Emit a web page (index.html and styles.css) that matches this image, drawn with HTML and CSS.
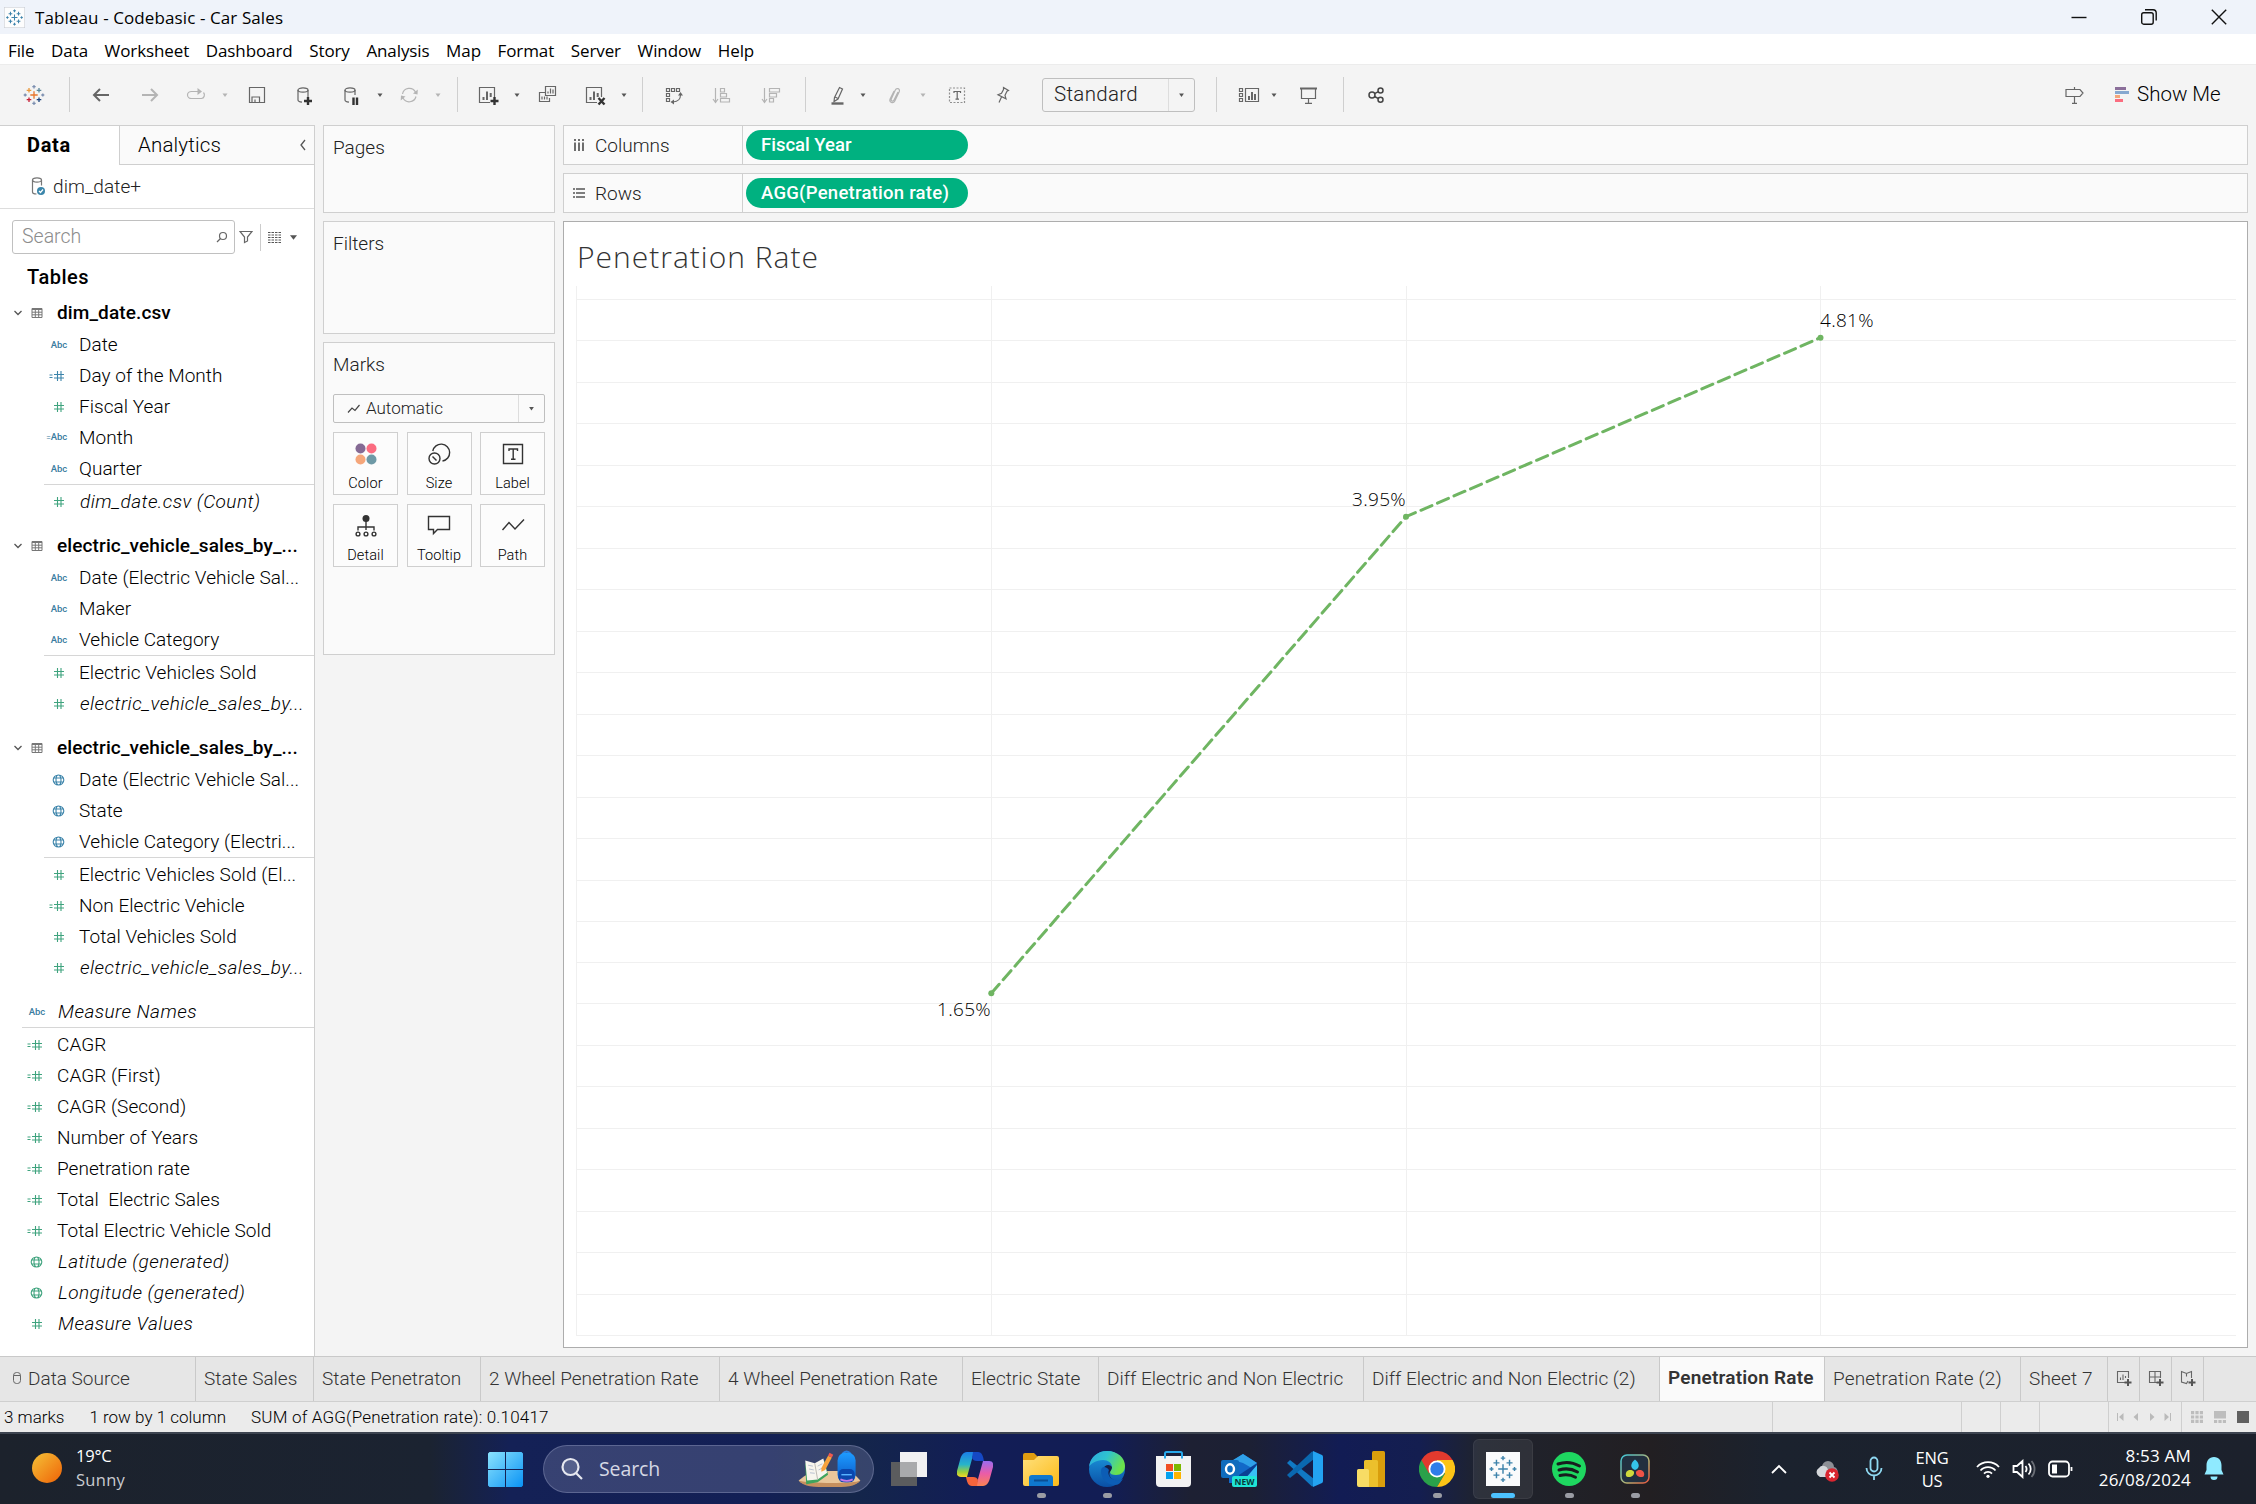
FILE: index.html
```html
<!DOCTYPE html>
<html lang="en">
<head>
<meta charset="utf-8">
<title>Tableau - Codebasic - Car Sales</title>
<link rel="stylesheet" href="styles.css">
</head>
<body>
<svg class="defs" aria-hidden="true">
  <defs>
    <symbol id="hash" viewBox="0 0 24 16"><path d="M13.500 3v10M17 3v10M10 6.500h10M10 10h10"/></symbol>
    <symbol id="eqhash" viewBox="0 0 24 16"><path d="M13.500 3v10M17 3v10M10 6.500h10M10 10h10M5.500 7h3M5.500 9.500h3"/></symbol>
    <symbol id="globe" viewBox="0 0 24 16"><path d="M9.200 8a5.300 5 0 1 0 10.600 0a5.300 5 0 1 0 -10.600 0M12 8a2.500 5 0 1 0 5 0a2.500 5 0 1 0 -5 0M9.800 6h9.400M9.800 10h9.400"/></symbol>
    <symbol id="table" viewBox="0 0 12 12"><path d="M1 1.500h10v9h-10zM1 2.500h10M1 5.200h10M1 7.800h10M4.300 3v7.500M7.700 3v7.500"/></symbol>
    <symbol id="chev" viewBox="0 0 10 8"><path d="M1.500 2l3.500 3.500 3.500-3.500"/></symbol>
    <symbol id="caret" viewBox="0 0 26 26"><path d="M10.500 11.500h5L13 15z"/></symbol>
    <symbol id="logo" viewBox="0 0 26 26">
      <path class="l1" d="M13 9.300v7.400M9.300 13h7.400"/>
      <path class="l2" d="M8 6v4.600M5.700 8.300h4.600"/>
      <path class="l3" d="M18 6v4.600M15.700 8.300h4.600"/>
      <path class="l4" d="M8 15.400v4.600M5.700 17.700h4.600"/>
      <path class="l5" d="M18 15.400v4.600M15.700 17.700h4.600"/>
      <path class="l6" d="M13 3v3.400M11.300 4.700h3.400M13 19.600v3.400M11.300 21.300h3.400M4.200 11.500v3M2.700 13h3M21.800 11.500v3M20.300 13h3"/>
    </symbol>
  </defs>
</svg>

<header class="titlebar">
  <svg class="app-icon" viewBox="0 0 26 26"><rect width="26" height="26" fill="#fdfdfd" stroke="#c4c8d0"/><use href="#logo" width="26" height="26"/></svg>
  <span class="app-title">Tableau - Codebasic - Car Sales</span>
  <div class="win-controls">
    <svg viewBox="0 0 16 16"><path d="M.5 8.500h15"/></svg>
    <svg viewBox="0 0 16 16"><rect x=".7" y="3.700" width="11.500" height="11.500" rx="2"/><path d="M4 .8h8a3.200 3.200 0 0 1 3.200 3.200v7.500"/></svg>
    <svg viewBox="0 0 16 16"><path d="M.8.8l14.400 14.400M15.200.8L.8 15.200"/></svg>
  </div>
</header>

<nav class="menubar">
  <span>File</span><span>Data</span><span>Worksheet</span><span>Dashboard</span><span>Story</span><span>Analysis</span><span>Map</span><span>Format</span><span>Server</span><span>Window</span><span>Help</span>
</nav>

<div class="toolbar">
  <svg class="tb colorlogo"><use href="#logo" width="26" height="26"/></svg>
  <i class="sep"></i>
  <svg class="tb bold"><path d="M21 13H6M12 7l-6 6 6 6"/></svg>
  <svg class="tb bold off"><path d="M5 13h15M14 7l6 6-6 6"/></svg>
  <svg class="tb off"><path d="M15 9.500H8.500a4 3.500 0 0 0 0 7h10a3 3.500 0 0 0 2-6"/><path class="f" d="M14.500 6l4.500 3.500-4.500 3.500z"/></svg>
  <svg class="tb caret off"><use href="#caret"/></svg>
  <svg class="tb"><path d="M5.500 5.500h15v15h-15zM8 20v-5h7.500v5M11 20v-2.500"/></svg>
  <svg class="tb"><path d="M6 8v10c0 1.500 2 2 4 2.200M16 8v7"/><ellipse cx="11" cy="8" rx="5" ry="2.200"/><path class="k" d="M16 15v8M12 19h8"/></svg>
  <svg class="tb"><path d="M7 8v10c0 1.500 2 2 4 2.200M17 8v5"/><ellipse cx="12" cy="8" rx="5" ry="2.200"/><path class="k" d="M15.500 15.500v7.500M19 15.500v7.500"/></svg>
  <svg class="tb caret"><use href="#caret"/></svg>
  <svg class="tb off"><path d="M6.500 12a7 7 0 0 1 13-2M20 14.500a7 7 0 0 1-13 1.500"/><path class="f" d="M17 11.500l4.500 1 .3-5zM9.500 14.500l-4.500-1-.3 5z"/></svg>
  <svg class="tb caret off"><use href="#caret"/></svg>
  <i class="sep"></i>
  <svg class="tb"><path d="M15 20.500H4.500v-15h15V15"/><path class="h" d="M8.500 18v-3M12 18V9.500M15.700 15v-4"/><path class="k" d="M19.500 15v8M15.500 19h8"/></svg>
  <svg class="tb caret"><use href="#caret"/></svg>
  <svg class="tb"><path d="M10 10.500H4.500v9h10V16M10.500 4.500h10v9h-10zM7 17.500v-3M9.500 17.500v-3M12 17.500v-3M13 11.500v-2M15.500 11.500v-5M18 11.500v-4"/></svg>
  <svg class="tb"><path d="M15 20.500H4.500v-15h15V15"/><path class="h" d="M8.500 18v-3M12 18V9.500M15.700 15v-4"/><path class="k" d="M16.500 16l6 6.500M22.500 16l-6 6.500"/></svg>
  <svg class="tb caret"><use href="#caret"/></svg>
  <i class="sep"></i>
  <svg class="tb"><path d="M5.500 6.500h3v3h-3zM10.500 6.500h3v3h-3zM15.500 6.500h3v3h-3zM5.500 11.500h3v3h-3zM5.500 16.500h3v3h-3zM19.500 12.500c0 5-2 7-7.500 7.500"/><path class="f" d="M17 13.500h5l-2.500-3.500zM13 22.500v-5l-3.500 2.500z"/></svg>
  <svg class="tb off"><path d="M6.500 6v14M4 17l2.500 3.500L9 17M11.500 6.500h4v3.500h-4zM11.500 11.500h6v3.500h-6zM11.500 16.500h9v3.500h-9z"/></svg>
  <svg class="tb off"><path d="M6.500 6v14M4 17l2.500 3.500L9 17M11.500 6.500h10v3.500h-10zM11.500 11.500h7v3.500h-7zM11.500 16.500h4v3.500h-4z"/></svg>
  <i class="sep"></i>
  <svg class="tb"><path d="M9.500 15.500l5-10 3 1.500-4.500 10-4 2.500zM10 15l3 1.500"/><path class="k g" d="M6.500 21.500h12"/></svg>
  <svg class="tb caret"><use href="#caret"/></svg>
  <svg class="tb off"><path d="M16 10l-4 8c-1 2-3.500 1-2.700-1l4-9c1-2.500 5-1.500 4 1.500l-4.500 9.500c-1.500 3-6 1.500-4.700-2l4-8"/></svg>
  <svg class="tb caret off"><use href="#caret"/></svg>
  <svg class="tb"><rect x="5.500" y="6" width="15" height="14.500" stroke-dasharray="2 1.500" opacity=".7"/><path d="M10 11v-1.500h6.500V11M13.200 9.500V17M11.500 17.200h3.500"/></svg>
  <svg class="tb"><path d="M13.500 5.500l5 3-1.500.8-2 4 1 3.500-8-4 3.500-1.500 2-3.800zM11.500 15l-2.500 5.500"/></svg>
  <div class="fit"><span>Standard</span><svg class="tb caret"><use href="#caret"/></svg></div>
  <i class="sep"></i>
  <svg class="tb"><path d="M9.500 6.500h13v13h-13zM3.500 6.500h3v3h-3zM3.500 11.500h3v3h-3zM3.500 16.500h3v3h-3z"/><path class="h" d="M13 18v-4M16 18V10M19 18v-6"/></svg>
  <svg class="tb caret"><use href="#caret"/></svg>
  <svg class="tb"><path d="M6.500 7v9.500h14V7M13.500 16.500V21M10 21.300h7"/><path class="h" d="M5 6.500h17"/></svg>
  <i class="sep"></i>
  <svg class="tb dark"><circle cx="9" cy="13" r="3"/><circle cx="17.500" cy="8.500" r="2.500"/><circle cx="17.500" cy="17.800" r="2.500"/><path d="M11.500 11.700l4-2M11.500 14.500l4 2.200"/></svg>
  <svg class="tb"><path d="M5 7.500h14l3 3.500-3 3.500H5zM13.500 5v2.500M13.500 14.500V21M11 21.300h5"/></svg>
  <div class="showme">
    <svg viewBox="0 0 15 16"><path fill="#8b6f9a" d="M0 0h11v3H0z"/><path fill="#86a8d0" d="M0 4h14v3H0z"/><path fill="#f4a67a" d="M0 8h5v3H0z"/><path fill="#fb6d80" d="M0 12h8v3H0z"/></svg>
    <span>Show Me</span>
  </div>
</div>

<main class="workspace">
  <aside class="data-pane">
    <div class="pane-tabs">
      <b>Data</b>
      <div><span>Analytics</span><svg viewBox="0 0 8 12"><path d="M6 1L2 6l4 5"/></svg></div>
    </div>
    <div class="source">
      <svg viewBox="0 0 16 24"><path d="M1.500 5v12c0 1 1.500 2 4 2M10.500 5v5.500"/><ellipse cx="6" cy="5" rx="4.500" ry="2.200"/><circle cx="10" cy="16" r="4" fill="#3b86ab" stroke="none"/><path d="M8 16l1.500 1.500 2.500-3" stroke="#fff"/></svg>
      <span>dim_date+</span>
    </div>
    <div class="search-row">
      <div class="search"><span>Search</span><svg viewBox="0 0 12 12"><circle cx="7" cy="5" r="3.500"/><path d="M4.500 7.500L1 11"/></svg></div>
      <svg class="funnel" viewBox="0 0 14 14"><path d="M1 1.500h12L8.500 7v4l-3 1.500V7z"/></svg>
      <i></i>
      <svg class="grid" viewBox="0 0 13 11"><path d="M0 .5h13M0 3h13M0 5.500h13M0 8h13M0 10.500h13" stroke-dasharray="2.500 1"/></svg>
      <svg class="drop" viewBox="0 0 8 5"><path d="M0 0h8L4 5z"/></svg>
    </div>
    <h3>Tables</h3>
    <section class="tables">
      <div class="head"><svg class="cv"><use href="#chev"/></svg><svg class="tbl"><use href="#table"/></svg><b>dim_date.csv</b></div>
      <div class="row blue"><em>Abc</em><span>Date</span></div>
      <div class="row blue"><svg><use href="#eqhash"/></svg><span>Day of the Month</span></div>
      <div class="row"><svg><use href="#hash"/></svg><span>Fiscal Year</span></div>
      <div class="row blue"><em><small>=</small>Abc</em><span>Month</span></div>
      <div class="row blue last"><em>Abc</em><span>Quarter</span></div>
      <div class="row it"><svg><use href="#hash"/></svg><span>dim_date.csv (Count)</span></div>

      <div class="head next"><svg class="cv"><use href="#chev"/></svg><svg class="tbl"><use href="#table"/></svg><b>electric_vehicle_sales_by_...</b></div>
      <div class="row blue"><em>Abc</em><span>Date (Electric Vehicle Sal...</span></div>
      <div class="row blue"><em>Abc</em><span>Maker</span></div>
      <div class="row blue last"><em>Abc</em><span>Vehicle Category</span></div>
      <div class="row"><svg><use href="#hash"/></svg><span>Electric Vehicles Sold</span></div>
      <div class="row it"><svg><use href="#hash"/></svg><span>electric_vehicle_sales_by...</span></div>

      <div class="head next"><svg class="cv"><use href="#chev"/></svg><svg class="tbl"><use href="#table"/></svg><b>electric_vehicle_sales_by_...</b></div>
      <div class="row blue"><svg><use href="#globe"/></svg><span>Date (Electric Vehicle Sal...</span></div>
      <div class="row blue"><svg><use href="#globe"/></svg><span>State</span></div>
      <div class="row blue last"><svg><use href="#globe"/></svg><span>Vehicle Category (Electri...</span></div>
      <div class="row"><svg><use href="#hash"/></svg><span>Electric Vehicles Sold (El...</span></div>
      <div class="row"><svg><use href="#eqhash"/></svg><span>Non Electric Vehicle</span></div>
      <div class="row"><svg><use href="#hash"/></svg><span>Total Vehicles Sold</span></div>
      <div class="row it"><svg><use href="#hash"/></svg><span>electric_vehicle_sales_by...</span></div>
    </section>
    <section class="measures">
      <div class="row blue it last"><em>Abc</em><span>Measure Names</span></div>
      <div class="row"><svg><use href="#eqhash"/></svg><span>CAGR</span></div>
      <div class="row"><svg><use href="#eqhash"/></svg><span>CAGR (First)</span></div>
      <div class="row"><svg><use href="#eqhash"/></svg><span>CAGR (Second)</span></div>
      <div class="row"><svg><use href="#eqhash"/></svg><span>Number of Years</span></div>
      <div class="row"><svg><use href="#eqhash"/></svg><span>Penetration rate</span></div>
      <div class="row"><svg><use href="#eqhash"/></svg><span>Total&nbsp; Electric Sales</span></div>
      <div class="row"><svg><use href="#eqhash"/></svg><span>Total Electric Vehicle Sold</span></div>
      <div class="row it"><svg><use href="#globe"/></svg><span>Latitude (generated)</span></div>
      <div class="row it"><svg><use href="#globe"/></svg><span>Longitude (generated)</span></div>
      <div class="row it"><svg><use href="#hash"/></svg><span>Measure Values</span></div>
    </section>
  </aside>

  <div class="cards">
    <section class="card pages"><h4>Pages</h4></section>
    <section class="card filters"><h4>Filters</h4></section>
    <section class="card marks">
      <h4>Marks</h4>
      <div class="mark-type"><svg class="zig" viewBox="0 0 14 12"><path d="M1 9.500l4-4.500 3 2.500 4.500-5.500"/></svg><span>Automatic</span><svg class="tb caret"><use href="#caret"/></svg></div>
      <div class="mark-grid">
        <div><svg viewBox="0 0 24 24"><g stroke="none"><circle cx="6.500" cy="6.500" r="5" fill="#856a94"/><circle cx="17.500" cy="6.500" r="5" fill="#fb6c80"/><circle cx="6.500" cy="17.500" r="5" fill="#f5a67a"/><circle cx="17.500" cy="17.500" r="5" fill="#6e99a6"/></g></svg><span>Color</span></div>
        <div><svg viewBox="0 0 24 24"><path d="M5.800 9A8.500 8.500 0 1 1 15.500 19"/><circle cx="7.500" cy="16.500" r="5.500"/><path d="M5.500 14.500l4 4"/></svg><span>Size</span></div>
        <div><svg viewBox="0 0 24 24"><path d="M2.500 2.500h19v19h-19zM8 9V7h8.500v2M12.200 7v10M10 17.200h4.500"/></svg><span>Label</span></div>
        <div><svg viewBox="0 0 24 24"><circle cx="12" cy="4.500" r="3.500" fill="#333" stroke="none"/><path d="M12 7v9M4 16.500V13h16v3.500"/><circle cx="4" cy="20" r="1.900"/><circle cx="12" cy="20" r="1.900"/><circle cx="20" cy="20" r="1.900"/></svg><span>Detail</span></div>
        <div><svg viewBox="0 0 24 24"><path d="M1.500 2.500h21v13h-12l-4 4v-4h-5z"/></svg><span>Tooltip</span></div>
        <div><svg viewBox="0 0 24 24"><path d="M1.500 16L8 8.500l6 6.500 9-9.500"/></svg><span>Path</span></div>
      </div>
    </section>
  </div>

  <div class="view">
    <div class="shelf">
      <div class="shelf-name"><svg viewBox="0 0 12 13"><path d="M2 0v2M6 0v2M10 0v2M2 3.500V12M6 3.500V12M10 3.500V12"/></svg><span>Columns</span></div>
      <div class="pill">Fiscal Year</div>
    </div>
    <div class="shelf">
      <div class="shelf-name"><svg viewBox="0 0 12 13"><path d="M0 2h2M0 6h2M0 10h2M3 2h9M3 6h9M3 10h9"/></svg><span>Rows</span></div>
      <div class="pill wide">AGG(Penetration rate)</div>
    </div>
    <div class="sheet">
      <h1>Penetration Rate</h1>
      <svg class="chart" viewBox="564 286 1683 1060">
        <path class="gridline" d="M576 299.500H2236M576 340.500H2236M576 382.500H2236M576 423.500H2236M576 465.500H2236M576 506.500H2236M576 548.500H2236M576 589.500H2236M576 631.500H2236M576 672.500H2236M576 714.500H2236M576 755.500H2236M576 797.500H2236M576 838.500H2236M576 880.500H2236M576 921.500H2236M576 962.500H2236M576 1003.500H2236M576 1045.500H2236M576 1086.500H2236M576 1128.500H2236M576 1169.500H2236M576 1211.500H2236M576 1252.500H2236M576 1294.500H2236M576 1335.500H2236"/>
        <path class="gridline" d="M576.500 286v1050M991.500 286v1050M1406.500 286v1050M1820.500 286v1050"/>
        <path class="series" d="M991.300 993.300L1406 516.700L1820.500 337.700"/>
        <g class="points"><circle cx="991.300" cy="993.300" r="3"/><circle cx="1406" cy="516.700" r="3"/><circle cx="1820.500" cy="337.700" r="3"/></g>
        <g class="labels">
          <text x="991" y="1016" text-anchor="end">1.65%</text>
          <text x="1406" y="506" text-anchor="end">3.95%</text>
          <text x="1820" y="327">4.81%</text>
        </g>
      </svg>
    </div>
  </div>
</main>

<nav class="sheets">
  <div class="ds"><svg viewBox="0 0 10 14"><rect x="1.500" y="1.500" width="7" height="11" rx="3"/><path d="M1.500 4.500h7"/></svg>Data Source</div>
  <div>State Sales</div>
  <div>State Penetraton</div>
  <div>2 Wheel Penetration Rate</div>
  <div>4 Wheel Penetration Rate</div>
  <div>Electric State</div>
  <div>Diff Electric and Non Electric</div>
  <div>Diff Electric and Non Electric (2)</div>
  <div class="active">Penetration Rate</div>
  <div class="loose">Penetration Rate (2)</div>
  <div class="loose">Sheet 7</div>
  <div class="new"><svg viewBox="0 0 16 18"><path d="M9 12.500H1.500v-11h11V8M4.500 10V7.500M7 10V4.500M9.500 8V6"/><path class="k" d="M12 9v7M8.500 12.500h7"/></svg></div>
  <div class="new"><svg viewBox="0 0 16 18"><path d="M9 12.500H1.500v-11h11V8M7 1.500v11M1.500 7h11"/><path class="k" d="M12 9v7M8.500 12.500h7"/></svg></div>
  <div class="new"><svg viewBox="0 0 16 18"><path d="M8 11l-1.500 2.500-5-1.500V1.500L6.500 3.500l5-2V8M6.500 3.500v3"/><path class="k" d="M12 9v7M8.500 12.500h7"/></svg></div>
</nav>

<footer class="status">
  <div class="facts"><span>3 marks</span><span>1 row by 1 column</span><span class="sum">SUM of AGG(Penetration rate): 0.10417</span></div>
  <div></div><div></div><div></div><div></div>
  <div class="pager">
    <svg viewBox="0 0 8 8"><path d="M1 0h1v8H1zM7.500 0v8L3 4z"/></svg>
    <svg viewBox="0 0 8 8"><path d="M6 0v8L1.500 4z"/></svg>
    <svg viewBox="0 0 8 8"><path d="M2 0v8l4.500-4z"/></svg>
    <svg viewBox="0 0 8 8"><path d="M6 0h1v8H6zM.5 0v8L5 4z"/></svg>
  </div>
  <div class="modes">
    <svg viewBox="0 0 12 12"><path d="M0 0h3.200v3.200H0zM4.400 0h3.200v3.200H4.400zM8.800 0H12v3.200H8.800zM0 4.400h3.200v3.200H0zM4.400 4.400h3.200v3.200H4.400zM8.800 4.400H12v3.200H8.800zM0 8.800h3.200V12H0zM4.400 8.800h3.200V12H4.400zM8.800 8.800H12V12H8.800z"/></svg>
    <svg viewBox="0 0 12 12"><path d="M0 0h12v7.500H0zM0 9h3.200v3H0zM4.400 9h3.200v3H4.400zM8.800 9H12v3H8.800z"/></svg>
    <svg class="on" viewBox="0 0 12 12"><path d="M0 0h12v12H0z"/></svg>
  </div>
</footer>

<footer class="taskbar">
  <svg class="fillsrc" aria-hidden="true"><defs>
    <linearGradient id="sun" x1="0" y1="0" x2="1" y2="1"><stop offset="0" stop-color="#f5c237"/><stop offset="1" stop-color="#ef6207"/></linearGradient>
    <linearGradient id="win" x1="0" y1="0" x2="1" y2="1"><stop offset="0" stop-color="#8be3fd"/><stop offset="1" stop-color="#0a93f5"/></linearGradient>
    <linearGradient id="fold" x1="0" y1="0" x2="1" y2="1"><stop offset="0" stop-color="#ffe07c"/><stop offset="1" stop-color="#fcbb1a"/></linearGradient>
    <linearGradient id="edge1" x1="0" y1="0" x2="1" y2=".4"><stop offset="0" stop-color="#2ba7e0"/><stop offset=".5" stop-color="#2fc3cf"/><stop offset="1" stop-color="#6be24b"/></linearGradient>
    <linearGradient id="edge2" x1="0" y1="0" x2="0" y2="1"><stop offset="0" stop-color="#1c9be0"/><stop offset="1" stop-color="#0a4fa5"/></linearGradient>
    <linearGradient id="cp1" x1="0" y1="0" x2="0" y2="1"><stop offset="0" stop-color="#1b7fe8"/><stop offset=".5" stop-color="#27b4c9"/><stop offset=".8" stop-color="#9dcf3b"/><stop offset="1" stop-color="#f5d626"/></linearGradient>
    <linearGradient id="cp2" x1="0" y1="0" x2="0" y2="1"><stop offset="0" stop-color="#9a6cf0"/><stop offset=".5" stop-color="#ea5ca8"/><stop offset="1" stop-color="#f98352"/></linearGradient>
    <linearGradient id="rim" x1="0" y1="0" x2="1" y2="1"><stop offset="0" stop-color="#3fc6d8"/><stop offset=".6" stop-color="#b7b070"/><stop offset="1" stop-color="#e8553f"/></linearGradient>
    <linearGradient id="bag" x1="0" y1="0" x2="0" y2="1"><stop offset="0" stop-color="#1d9bff"/><stop offset="1" stop-color="#0a56c4"/></linearGradient>
  </defs></svg>
  <div class="weather">
    <svg viewBox="0 0 30 30"><circle cx="15" cy="15" r="15" fill="url(#sun)"/></svg>
    <div><span>19°C</span><span class="dim">Sunny</span></div>
  </div>
  <svg class="start" viewBox="0 0 35 35"><path fill="url(#win)" d="M1.500 0H17v17H0V1.500zM18 0h15.500L35 1.500V17H18zM0 18h17v17H1.500L0 33.500zM18 18h17v15.500L33.500 35H18z"/></svg>
  <div class="tsearch">
    <svg class="mag" viewBox="0 0 24 24"><circle cx="10.500" cy="10" r="8" fill="#7480a8" fill-opacity=".5"/><path d="M16 16l6 6"/></svg>
    <span>Search</span>
    <svg class="art" viewBox="0 0 68 40">
      <path d="M2 32c10-8 14-10 34-10s24 2 31 10c-6 6-14 6-32 6S8 38 2 32z" fill="#e9c79b"/>
      <path d="M2 32c6 3 58 4 65 0-6 7-14 7-32 7S8 39 2 32z" fill="#c58f5e"/>
      <path d="M9 14l10 2 10-5 4 15-11 8-12 2z" fill="#3fa45d"/><path d="M9 11l10 3 9-5 4 15-10 7-11 1z" fill="#f7f5ee"/><path d="M19 14l3 17" stroke="#b9b6b0"/>
      <path d="M12 16l5 1M13 20l5 1M14 24l5 .5M22 17l5-2.500M23 21l5-2.500" stroke="#b5bfd0"/>
      <path d="M26 19l7-13 4 2-7 13-4 2z" fill="#f6a23c"/><path d="M33 6l1.500-3 4 2-1.500 3z" fill="#f05a4f"/>
      <path d="M48 4q4.500-5 9 0" stroke="#2a7fe0" stroke-width="2"/><rect x="43" y="3" width="19" height="31" rx="8" fill="url(#bag)"/><rect x="44" y="20" width="17" height="14" rx="5" fill="#0b47ad"/><path d="M47 26h11" stroke="#58b4ff" stroke-width="1.500"/><path d="M46 31q7 3 13 0" stroke="#c77ae8" stroke-width="2"/>
    </svg>
  </div>
  <div class="apps">
    <div><svg viewBox="0 0 36 36"><path d="M0 11h26v24H0z" fill="#5b5c5e"/><path d="M9 1h27v25H9z" fill="#f1f1f2"/><path d="M9 11h17v15H9z" fill="#a9aaac"/></svg></div>
    <div><svg viewBox="0 0 36 36"><path d="M20 1H10C6 1 4 5 3 9L0 20c-1 4 1 6 4 6h6l5-18c1-4 2-7 5-7z" fill="url(#cp1)"/><path d="M16 1h5c4 0 5 4 6 9h-7c-3 0-4-1-5-3z" fill="#1548c4"/><path d="M16 35h10c4 0 6-4 7-8l3-11c1-4-1-6-4-6h-6l-5 18c-1 4-2 7-5 7z" fill="url(#cp2)"/><path d="M20 35h-5c-4 0-5-4-6-9h7c3 0 4 1 5 3z" fill="#f4643c"/></svg></div>
    <div class="run"><svg viewBox="0 0 36 36"><path d="M0 4a2 2 0 0 1 2-2h9l4 4-3 4H0z" fill="#e09d10"/><path d="M0 9h11l4-4h19a2 2 0 0 1 2 2v26a2 2 0 0 1-2 2H2a2 2 0 0 1-2-2z" fill="url(#fold)"/><path d="M6 35V27a3 3 0 0 1 3-3h18a3 3 0 0 1 3 3v8z" fill="#0f78cf"/><path d="M11 29.500h14" stroke="#0a4f94" stroke-width="2"/></svg></div>
    <div class="run"><svg viewBox="0 0 36 36"><circle cx="18" cy="18" r="18" fill="url(#edge2)"/><path d="M0 16C1 6 9 0 18 0c11 0 18 7 18 15 0 6-4 9-9 9-4 0-6-1-6-3s2-2 2-5c0-4-4-7-9-7C7 9 1 13 0 16z" fill="url(#edge1)"/><path d="M14 18c-3 8 4 15 11 15 3 0 6-1 8-3-4 1-8 0-11-3-2-2-2-5-1-6 1-2 2-3 2-5-2-3-7-3-9 2z" fill="#141d45"/><path d="M12 20c0 8 6 14 14 14 2 0 4-1 5-2l3-4c-3 2-8 2-12-1-3-3-3-6-2-8-4-5-8-3-8 1z" fill="#0c5db5"/></svg></div>
    <div><svg viewBox="0 0 36 36"><path d="M10 7V2.500A1.500 1.500 0 0 1 11.500 1h14A1.500 1.500 0 0 1 27 2.500V7" stroke="#28a8ea" stroke-width="2"/><path d="M1 5h35v27a4 4 0 0 1-4 4H5a4 4 0 0 1-4-4z" fill="#f2f2f3"/><path d="M10 5v2.500M27 5v2.500" stroke="#28a8ea" stroke-width="2"/><path d="M11 13h7v7h-7z" fill="#f04e23"/><path d="M19 13h7v7h-7z" fill="#7cb800"/><path d="M11 21h7v7h-7z" fill="#05a1ee"/><path d="M19 21h7v7h-7z" fill="#fdb400"/></svg></div>
    <div><svg viewBox="0 0 36 36"><path d="M8 12L22 3l14 9v20H8z" fill="#1268c8"/><path d="M12 9l10-6 14 9v8L22 12z" fill="#2fa0e8"/><path d="M18 24l18-12v14H18z" fill="#0a3f94"/><path d="M36 14v14H24z" fill="#38c0f5"/><rect y="9" width="18" height="18" rx="2" fill="#0f6cbd"/><ellipse cx="9" cy="18" rx="4" ry="4.700" stroke="#fff" stroke-width="2.400"/><rect x="11" y="25" width="25" height="11" rx="2" fill="#1fe5d5"/><text x="23.500" y="34" class="newtag" text-anchor="middle">NEW</text></svg></div>
    <div><svg viewBox="0 0 36 36"><path d="M0 12l3-3 24 19v7l-2 .5z" fill="#1079c4"/><path d="M0 24l3 3L27 8V1l-2-.5z" fill="#0a68b0"/><path d="M26 0l9 4q1 .5 1 2v24q0 1.500-1 2l-9 4z" fill="#23a3f2"/></svg></div>
    <div><svg viewBox="0 0 36 36"><path d="M19 1.500A1.500 1.500 0 0 1 20.500 0h10A1.500 1.500 0 0 1 32 1.500V36H19z" fill="#d99e0c"/><path d="M11 10.500A1.500 1.500 0 0 1 12.500 9h11a1.500 1.500 0 0 1 1.500 1.500V36H11z" fill="#ecc02c"/><path d="M4 19.500A1.500 1.500 0 0 1 5.500 18h9a1.500 1.500 0 0 1 1.500 1.500V36H6a2 2 0 0 1-2-2z" fill="#f7dc65"/></svg></div>
    <div class="run"><svg viewBox="0 0 36 36"><path d="M18 18L2.400 9A18 18 0 0 0 18 36l8-13.500z" fill="#2aa14a"/><path d="M18 18h0l8 4.500L18 36A18 18 0 0 0 33.600 9H18z" fill="#fcc416"/><path d="M2.400 9A18 18 0 0 1 33.600 9H18l-8 13.500z" fill="#e23a2e"/><circle cx="18" cy="18" r="8.500" fill="#fff"/><circle cx="18" cy="18" r="6.700" fill="#2f7de9"/></svg></div>
    <div class="cur"><svg viewBox="0 0 26 26"><rect width="26" height="26" fill="#fafbfc"/><use href="#logo" width="26" height="26"/></svg></div>
    <div class="run"><svg viewBox="0 0 36 36"><circle cx="18" cy="18" r="17" fill="#1ed760"/><path d="M7 13q11-4 21.500 2M8 19q10-3 18.500 2M9 24.500q9-2 15.500 1.800" stroke="#181c1e" stroke-width="3" stroke-linecap="round"/></svg></div>
    <div class="run"><svg viewBox="0 0 36 36"><rect x="4" y="4" width="28" height="28" rx="6" fill="#22303f" stroke="url(#rim)" stroke-width="1.500"/><path d="M18 8.500c5 4 5 9 0 10.500-5-1.500-5-6.500 0-10.500z" fill="#35c3e8"/><path d="M17 21c-1-2-4-2.500-6-1.500s-3 4-1.500 6c3 1.500 8 0 7.500-4.500z" fill="#cfd93c"/><path d="M19 21c1-2 4-2.500 6-1.500s3 4 1.500 6c-3 1.500-8 0-7.500-4.500z" fill="#ee5347"/></svg></div>
  </div>
  <div class="tray">
    <svg class="t-chev" viewBox="0 0 16 10"><path d="M1 9l7-7 7 7"/></svg>
    <svg class="t-cloud" viewBox="0 0 26 22"><g stroke="none"><path d="M8 7a6 6 0 0 1 12 0c4 0 6 9 0 10H8z" fill="#8d8f95"/><path d="M6 17a5 5 0 0 1-1-9 5 5 0 0 1 9 2l3 7z" fill="#d5d7da"/><circle cx="18" cy="15" r="6.800" fill="#d9252f"/></g><path d="M15.500 12.500l5 5M20.500 12.500l-5 5"/></svg>
    <svg class="t-mic" viewBox="0 0 18 26"><rect x="5.500" y="1.500" width="7" height="14" rx="3.500"/><path d="M1.500 12a7.500 7.500 0 0 0 15 0M9 19.500V24"/></svg>
    <div class="lang"><span>ENG</span><span>US</span></div>
    <svg class="t-wifi" viewBox="0 0 26 20"><path d="M2 8a15 15 0 0 1 22 0M5.500 11.500a10 10 0 0 1 15 0M9 14.700a5.500 5.500 0 0 1 8 0"/><circle cx="13" cy="17.300" r="1.600" fill="#fff" stroke="none"/></svg>
    <svg class="t-vol" viewBox="0 0 24 20"><path d="M1.500 7H5l5.500-5v16L5 13H1.500zM13.500 7a5 5 0 0 1 0 6M16.500 4.500a8 8 0 0 1 0 11"/><path d="M19.500 2a12 12 0 0 1 0 16" opacity=".35"/></svg>
    <svg class="t-bat" viewBox="0 0 25 18"><rect x="1" y="1.500" width="20" height="15" rx="3.500"/><path d="M23.500 7v4"/><path d="M4 4.500h5v9H4z" fill="#fff" stroke="none"/></svg>
    <div class="clock"><span>8:53 AM</span><span>26/08/2024</span></div>
    <svg class="t-bell" viewBox="0 0 20 24"><path d="M10 0c5 0 7.500 4 7.500 8.500V13l2 4.500H.5l2-4.500V8.500C2.500 4 5 0 10 0zM6.500 19.500h7a3.500 3.500 0 0 1-7 0z"/></svg>
  </div>
</footer>
</body>
</html>
```
FILE: styles.css
```css
* { box-sizing: border-box; }
body {
  margin: 0;
  width: 2256px;
  height: 1504px;
  overflow: hidden;
  display: flex;
  flex-direction: column;
  background: #f4f4f4;
  color: #000;
  font: 300 19px/1 Roboto, "Liberation Sans", sans-serif;
}
svg { display: block; fill: none; flex: none; }
h1, h3, h4 { margin: 0; }
span { white-space: nowrap; }
.defs, .fillsrc { position: absolute; width: 0; height: 0; }

/* the plus-sign mark takes its arm colours from custom properties */
.l1 { stroke: var(--l1, #3d83ab); }
.l2 { stroke: var(--l2, #3d83ab); }
.l3 { stroke: var(--l3, #3d83ab); }
.l4 { stroke: var(--l4, #3d83ab); }
.l5 { stroke: var(--l5, #3d83ab); }
.l6 { stroke: var(--l6, #3d83ab); }

/* window chrome */
.titlebar {
  height: 34px;
  flex: none;
  display: flex;
  align-items: center;
  padding-left: 4px;
  background: #eff3fa;
  font: 400 17px/35px "Open Sans", sans-serif;
}
.app-icon { width: 21px; height: 21px; stroke-width: 1.3; }
.app-title { margin-left: 10px; letter-spacing: .1px; }
.win-controls { margin-left: auto; display: flex; gap: 54px; padding-right: 29px; }
.win-controls svg { width: 16px; height: 16px; stroke: #111; stroke-width: 1.4; }
.menubar {
  height: 30px;
  flex: none;
  display: flex;
  gap: 16.6px;
  padding-left: 8px;
  background: #fff;
  font: 400 17px/33px "Open Sans", sans-serif;
  letter-spacing: -.1px;
}

/* toolbar */
.toolbar {
  height: 61px;
  flex: none;
  display: grid;
  grid-template-columns: 35px 32px 49px 46px 29px 32px 48px 46px 29px 29px 29px 19px 31px 29px 31px 47px 29px 18px 32px 48px 49px 34px 33px 25px 32px 28px 34px 46px 52px 161px 33px 25px 34px 35px 33px 698px 54px 130px;
  align-items: center;
  padding: 0 0 1px 21px;
  border-top: 1px solid #ececec;
}
.tb { width: 26px; height: 26px; stroke: #666; stroke-width: 1.2; }
.tb.bold { stroke-width: 2; }
.tb.dark { stroke: #444; stroke-width: 1.5; }
.tb.off { stroke: #b4b4b4; }
.tb .f { fill: #666; stroke: none; }
.tb.off .f { fill: #b4b4b4; }
.tb .k { stroke: #333; stroke-width: 2.4; }
.tb .k.g { stroke: #666; }
.tb .h { stroke-width: 2; }
.caret { stroke: none; fill: #555; }
.caret.off { fill: #b4b4b4; stroke: none; }
.colorlogo {
  stroke-width: 1.3;
  --l1: #e8762d;
  --l2: #e9993e;
  --l3: #5b879b;
  --l4: #c72037;
  --l5: #1f457e;
  --l6: #7c8fb0;
}
.sep { width: 1px; height: 35px; margin-left: 13px; background: #cfcfcf; }
.fit {
  width: 153px;
  height: 34px;
  display: flex;
  align-items: center;
  justify-content: space-between;
  padding-left: 11px;
  border: 1px solid #bfbfbf;
  border-radius: 3px;
  font-size: 20.5px;
  color: #222;
  letter-spacing: .3px;
}
.fit .caret { height: 32px; border-left: 1px solid #ddd; }
.showme { display: flex; align-items: center; gap: 7px; font-size: 20.5px; }
.showme svg { width: 15px; height: 16px; }

/* workspace */
.workspace { height: 1231px; flex: none; display: flex; }
.data-pane { width: 315px; background: #fff; border-right: 1px solid #cfcfcf; border-top: 1px solid #cfcfcf; }
.pane-tabs { height: 39px; display: flex; }
.pane-tabs b { width: 119px; padding-left: 27px; font: 700 20px/39px Roboto, sans-serif; letter-spacing: .7px; }
.pane-tabs div {
  flex: 1;
  display: flex;
  align-items: center;
  justify-content: space-between;
  padding: 0 7px 0 18px;
  background: #fafafa;
  border-left: 1px solid #cfcfcf;
  border-bottom: 1px solid #cfcfcf;
  font-size: 20.5px;
  letter-spacing: .15px;
}
.pane-tabs svg { width: 8px; height: 12px; stroke: #555; stroke-width: 1.3; }
.source { height: 44px; display: flex; align-items: center; padding-left: 31px; gap: 6px; border-bottom: 1px solid #ddd; color: #222; letter-spacing: .1px; }
.source svg { width: 16px; height: 24px; stroke: #777; stroke-width: 1.2; margin-top: 1px; }
.search-row { display: flex; align-items: center; margin-top: 11px; padding-left: 12px; }
.search { width: 223px; height: 34px; display: flex; align-items: center; justify-content: space-between; padding: 0 6px 0 9px; border: 1px solid #c0c0c0; border-radius: 3px; color: #8c8c8c; font-size: 19.5px; }
.search svg { width: 12px; height: 12px; stroke: #666; stroke-width: 1.2; }
.funnel { width: 14px; height: 14px; margin-left: 4px; stroke: #666; stroke-width: 1.2; }
.search-row i { width: 1px; height: 27px; margin-left: 7px; background: #ccc; }
.grid { width: 13px; height: 11px; margin-left: 7px; stroke: #555; stroke-width: 1; }
.drop { width: 7px; height: 5px; margin-left: 9px; fill: #555; }
h3 { font: 500 20px/47px Roboto, sans-serif; padding-left: 27px; height: 42px; letter-spacing: .5px; }
.head { height: 33px; display: flex; align-items: center; padding-left: 13px; }
.head.next { margin-top: 12px; }
.head b { font-weight: 500; margin-left: 14px; letter-spacing: .12px; }
.cv { width: 10px; height: 8px; stroke: #555; stroke-width: 1.3; }
.tbl { width: 12px; height: 12px; margin-left: 8px; stroke: #777; stroke-width: 1; }
.row { height: 31px; display: flex; align-items: center; margin-left: 44px; letter-spacing: .04px; }
.row svg { width: 24px; height: 16px; stroke: #3fa37e; stroke-width: 1.1; }
.row em { width: 23px; text-align: right; font: 500 9.5px/16px Roboto, sans-serif; color: #3a7ca0; letter-spacing: -.1px; white-space: nowrap; }
.row em small { font-size: 8px; }
.row svg + span { margin-left: 11px; }
.row em + span { margin-left: 12px; }
.row.blue svg { stroke: #3c84aa; }
.row.it span { font-style: italic; letter-spacing: .45px; position: relative; left: 1px; }
.row.last { height: 32px; border-bottom: 1px solid #d6d6d6; margin-bottom: 1px; }
.measures { margin-top: 13px; }
.measures .row { margin-left: 22px; }

.cards { width: 248px; padding: 0 8px; display: flex; flex-direction: column; gap: 8px; }
.card { border: 1px solid #cfcfcf; background: #fafafa; padding: 0 9px; }
.card h4 { font: 300 19px/43px Roboto, sans-serif; height: 51px; color: #222; }
.pages { height: 88px; }
.filters { height: 113px; }
.marks { height: 313px; }
.mark-type { height: 29px; display: flex; align-items: center; padding-left: 13px; border: 1px solid #bfbfbf; border-radius: 2px; font-size: 17px; color: #222; }
.zig { width: 14px; height: 12px; stroke: #444; stroke-width: 1.2; margin-right: 5px; }
.mark-type .caret { margin-left: auto; height: 27px; border-left: 1px solid #ddd; }
.mark-grid { display: grid; grid-template-columns: repeat(3, 65px); justify-content: space-between; gap: 9px 0; margin-top: 9px; }
.mark-grid div { height: 63px; border: 1px solid #cfcfcf; background: #fcfcfc; display: flex; flex-direction: column; align-items: center; padding-top: 9px; gap: 11px; font-size: 14.5px; letter-spacing: .1px; }
.mark-grid svg { width: 24px; height: 24px; stroke: #333; stroke-width: 1.4; }

.view { flex: 1; padding-right: 8px; }
.shelf { height: 40px; margin-bottom: 8px; display: flex; align-items: center; border: 1px solid #cfcfcf; background: #fafafa; }
.shelf-name { width: 179px; height: 38px; display: flex; align-items: center; padding-left: 9px; border-right: 1px solid #cfcfcf; color: #222; }
.shelf-name svg { width: 12px; height: 13px; stroke: #555; stroke-width: 1.7; margin-right: 10px; }
.pill { width: 222px; height: 30px; margin-left: 3px; padding-left: 15px; border-radius: 15px; background: #00b180; color: #fff; font: 500 18.5px/30px Roboto, sans-serif; white-space: nowrap; }
.pill.wide { letter-spacing: .25px; }
.sheet { height: 1127px; background: #fff; border: 1px solid #adadad; }
.sheet h1 { height: 64px; padding-left: 13px; font: 300 30px/70px "Open Sans", sans-serif; color: #333; letter-spacing: 1px; }
.chart { width: 1683px; height: 1060px; }
.gridline { stroke: #f0f0f0; stroke-width: 1; shape-rendering: crispEdges; }
.series { stroke: #6fb562; stroke-width: 3; stroke-linecap: round; stroke-dasharray: 12 6; }
.points { fill: #6fb562; }
.labels { fill: #000; font: 300 19px "Open Sans", sans-serif; letter-spacing: .3px; }

/* sheet tabs */
.sheets {
  height: 46px;
  flex: none;
  display: grid;
  grid-template-columns: 196px 118px 167px 239px 243px 136px 265px 296px 165px 196px 87px 32px 32px 32px;
  border-top: 1px solid #c9c9c9;
  border-bottom: 1px solid #cfcfcf;
  background: #e6e6e6;
  color: #333;
  line-height: 44px;
}
.sheets div { padding-left: 8px; border-right: 1px solid #c9c9c9; white-space: nowrap; }
.sheets .ds { display: flex; align-items: center; gap: 6px; padding-left: 12px; }
.ds svg { width: 10px; height: 14px; stroke: #666; margin-top: -2px; }
.sheets .active { background: #fafafa; font-weight: 600; line-height: 42px; letter-spacing: .2px; }
.sheets .loose { letter-spacing: .15px; }
.sheets .new { display: flex; align-items: center; padding-left: 8px; }
.new svg { width: 16px; height: 18px; stroke: #666; stroke-width: 1.1; }
.new .k { stroke-width: 2; stroke: #555; }

.status { height: 30px; flex: none; display: grid; grid-template-columns: 1773px 189px 39px 39px 69px 73px 1fr; background: #ebebeb; font-size: 17px; line-height: 30px; color: #000; }
.status > div { border-right: 1px solid #cfcfcf; }
.status > div:last-child { border: 0; }
.facts { display: flex; gap: 25px; padding-left: 4px; }
.facts .sum { letter-spacing: .18px; }
.pager { display: flex; align-items: center; gap: 8px; padding-left: 7px; }
.pager svg { width: 8px; height: 8px; fill: #bababa; }
.modes { display: flex; align-items: center; gap: 11px; padding-left: 9px; }
.modes svg { width: 12px; height: 12px; fill: #bdbdbd; }
.modes .on { fill: #606060; }

/* taskbar */
.taskbar {
  height: 72px;
  flex: none;
  display: flex;
  align-items: center;
  border-top: 2px solid #3d4450;
  background: linear-gradient(90deg, #1c222c 0, #1b2331 430px, #142156 510px, #131f55 760px, #14264a 850px, #121d56 980px, #121d54 1110px, #1d2033 1190px, #1c2034 1250px, #121c54 1340px, #141e50 1420px, #1f232e 1480px, #221f22 1650px, #1b222e 1770px, #1c212c 100%);
  background-origin: border-box;
  color: #fff;
  font: 400 16.5px/24px "Open Sans", sans-serif;
}
.weather { width: 488px; display: flex; align-items: center; padding-left: 32px; gap: 14px; }
.weather svg { width: 30px; height: 30px; margin-top: -3px; }
.weather div, .lang, .clock { display: flex; flex-direction: column; }
.weather div { letter-spacing: -.2px; margin-top: -3px; }
.weather .dim { color: #c9cbd0; letter-spacing: .3px; }
.start { width: 35px; height: 35px; }
.tsearch { width: 331px; height: 48px; margin: 0 2px 0 20px; display: flex; align-items: center; padding: 0 10px 0 16px; border-radius: 24px; background: rgba(112, 120, 160, .38); border: 1px solid rgba(150, 158, 195, .4); font-size: 19.5px; color: #d5d8e4; letter-spacing: -.1px; }
.mag { width: 24px; height: 24px; stroke: #e6e8f0; stroke-width: 2.2; margin-right: 15px; }
.art { width: 68px; height: 38px; margin-left: auto; }
.apps { display: flex; }
.apps div { width: 66px; height: 60px; display: flex; justify-content: center; padding-top: 12px; position: relative; }
.apps svg { width: 36px; height: 36px; }
.apps .run::after, .apps .cur::after { content: ""; position: absolute; left: 28.500px; bottom: 1px; width: 9px; height: 5px; border-radius: 3px; background: #9a9ca4; }
.apps .cur { width: 60px; margin: 0 3px; border-radius: 6px; background: rgba(255, 255, 255, .07); border: 1px solid rgba(255, 255, 255, .06); }
.apps .cur svg { width: 34px; height: 34px; stroke-width: 1.1; }
.apps .cur::after { left: 17px; width: 24px; bottom: 0; background: #4cc2ff; }
.newtag { font: 700 8.5px "Open Sans", sans-serif; fill: #063a3a; }
.tray { display: flex; align-items: center; margin-left: 103px; }
.tray svg { stroke: #fff; stroke-width: 1.8; }
.t-chev { width: 16px; height: 10px; }
.tray .t-cloud { width: 26px; height: 22px; margin-left: 27px; margin-top: 4px; }
.tray .t-mic { width: 18px; height: 26px; margin-left: 25px; stroke: #8fd9f2; }
.lang { width: 60px; margin-left: 19px; align-items: center; line-height: 23px; letter-spacing: -.2px; margin-top: -1px; }
.t-wifi { width: 26px; height: 20px; margin-left: 13px; }
.t-vol { width: 24px; height: 20px; margin-left: 11px; }
.t-bat { width: 25px; height: 18px; margin-left: 12px; }
.clock { width: 110px; margin-left: 8px; align-items: flex-end; font-size: 17px; letter-spacing: .2px; margin-top: -3px; }
.tray .t-bell { width: 20px; height: 24px; margin-left: 13px; margin-top: -1px; fill: #8feaff; stroke: none; }
```
